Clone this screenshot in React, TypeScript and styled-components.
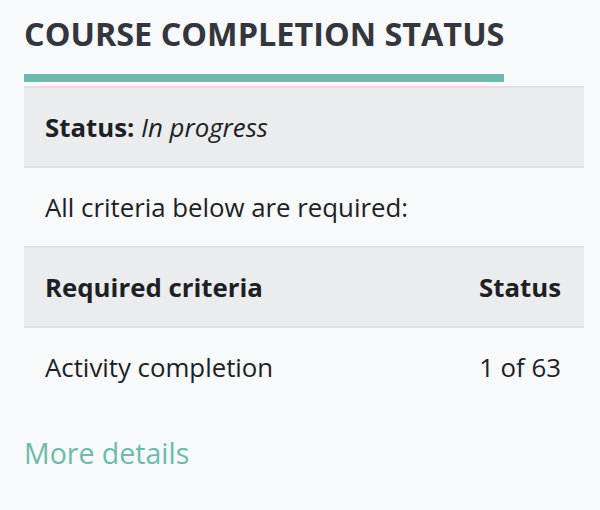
import React from 'react';
import styled, { createGlobalStyle } from 'styled-components';

const GlobalStyle = createGlobalStyle`
  html, body {
    margin: 0;
    padding: 0;
    background-color: #f8f9fb;
    font-family: 'Open Sans', 'Noto Sans', sans-serif;
  }
`;

const Block = styled.section`
  width: 560px;
  padding: 14px 16px 0 24px;
  color: #1d2125;
`;

const Title = styled.h5`
  display: inline-block;
  margin: 0 0 4px 0;
  padding-bottom: 22px;
  border-bottom: 8px solid #6cbbad;
  font-size: 32.4px;
  line-height: 38px;
  font-weight: 700;
  color: #33363d;
`;

const Table = styled.div`
  display: flex;
  flex-direction: column;
`;

const Row = styled.div<{ $shaded?: boolean }>`
  display: flex;
  justify-content: space-between;
  align-items: center;
  height: 78px;
  padding: 0 23px 0 21px;
  border-top: 2px solid #dfe1e6;
  background-color: ${(p) => (p.$shaded ? '#ebecee' : 'transparent')};
  font-size: 25.8px;
  line-height: 1.5;
`;

const Bold = styled.span`
  font-weight: 700;
`;

const Em = styled.em`
  font-style: italic;
`;

const MoreLink = styled.a`
  display: inline-block;
  margin-top: 26px;
  font-size: 28.5px;
  line-height: 42px;
  color: #6cbbad;
  text-decoration: none;
`;

export default function App() {
  return (
    <>
      <GlobalStyle />
      <Block>
        <Title>COURSE COMPLETION STATUS</Title>
        <Table>
          <Row $shaded>
            <span>
              <Bold>Status:</Bold> <Em>In progress</Em>
            </span>
          </Row>
          <Row>
            <span>All criteria below are required:</span>
          </Row>
          <Row $shaded>
            <Bold>Required criteria</Bold>
            <Bold>Status</Bold>
          </Row>
          <Row>
            <span>Activity completion</span>
            <span>1 of 63</span>
          </Row>
        </Table>
        <MoreLink href="#">More details</MoreLink>
      </Block>
    </>
  );
}
